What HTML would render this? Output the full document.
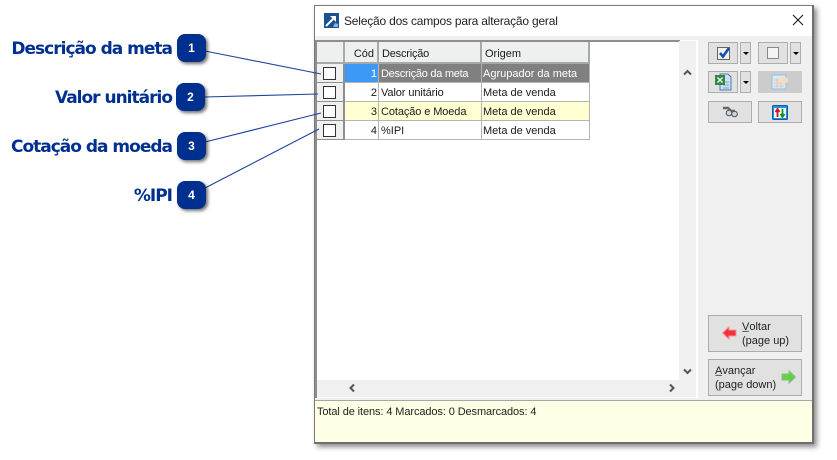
<!DOCTYPE html>
<html><head><meta charset="utf-8">
<style>
html,body{margin:0;padding:0;background:#fff;}
body{width:837px;height:460px;position:relative;overflow:hidden;font-family:"DejaVu Sans","Liberation Sans",sans-serif;}
.a{position:absolute;box-sizing:border-box;}
.lbl{position:absolute;right:665px;font:bold 17px/22px "DejaVu Sans",sans-serif;color:#00308f;white-space:nowrap;letter-spacing:-1px;}
.num{position:absolute;width:29px;height:28px;background:#00308f;border-radius:8px;color:#fff;font:bold 12px/28px "Liberation Sans",sans-serif;text-align:center;box-shadow:2px 2px 3px rgba(0,0,0,.55);}
.t{position:absolute;font:11px/18px "Liberation Sans",sans-serif;color:#222;white-space:nowrap;}
.cell{position:absolute;box-sizing:border-box;border-right:1px solid #b4b4b4;border-bottom:1px solid #b4b4b4;font:11px/20px "Liberation Sans",sans-serif;color:#1a1a1a;padding-left:2px;white-space:nowrap;overflow:hidden;height:19px;}
.hd{position:absolute;box-sizing:border-box;background:#eef0f0;border-right:2px solid #a8a8a8;border-bottom:2px solid #a8a8a8;font:11px/24px "Liberation Sans",sans-serif;color:#1a1a1a;height:22px;top:42px;padding-left:3px;overflow:hidden;}
.ind{position:absolute;box-sizing:border-box;left:317px;width:28px;height:19px;background:#f0f0f0;border-right:2px solid #8e8e8e;border-bottom:1px solid #8e8e8e;}
.ind i{position:absolute;left:6px;top:3px;width:13px;height:13px;border:1px solid #333;background:#fff;box-sizing:border-box;}
.btn{position:absolute;box-sizing:border-box;background:#e1e1e1;border:1px solid #adadad;}
.dd:after{content:"";position:absolute;left:2px;top:9px;border-left:3px solid transparent;border-right:3px solid transparent;border-top:3px solid #000;}
.n{letter-spacing:-.1px;}
</style></head>
<body>
<!-- callout lines -->
<svg class="a" style="left:0;top:0;z-index:3" width="837" height="460">
<g stroke="#1c44a0" stroke-width="1.1" fill="none">
<line x1="205" y1="51" x2="321" y2="74"/>
<line x1="204" y1="97" x2="318" y2="94"/>
<line x1="205" y1="142" x2="321" y2="113"/>
<line x1="205" y1="188" x2="319" y2="129"/>
</g></svg>

<div class="lbl" style="top:38px;">Descrição da meta</div>
<div class="lbl" style="top:87px;">Valor unitário</div>
<div class="lbl" style="top:136px;">Cotação da moeda</div>
<div class="lbl" style="top:185px;">%IPI</div>
<div class="num" style="left:177px;top:34px;z-index:4">1</div>
<div class="num" style="left:176px;top:83px;z-index:4">2</div>
<div class="num" style="left:177px;top:132px;z-index:4">3</div>
<div class="num" style="left:177px;top:181px;z-index:4">4</div>

<!-- window -->
<div class="a" style="left:314px;top:5px;width:500px;height:439px;background:#f0f0f0;border:1px solid #7a7a7a;border-right:2px solid #6f6f6f;border-bottom:2px solid #6f6f6f;box-shadow:3px 3px 5px rgba(0,0,0,.45);"></div>
<div class="a" style="left:315px;top:6px;width:497px;height:30px;background:#fff;"></div>
<svg class="a" style="left:324px;top:13px" width="15" height="15" viewBox="0 0 15 15">
<rect width="15" height="15" fill="#1b4f96"/><path d="M2 13 L9 6" stroke="#fff" stroke-width="2"/><path d="M6 3h6v6z" fill="#fff"/><path d="M9 14l2-4 3 1v3z" fill="#8fb4dc"/></svg>
<div class="t" style="left:344px;top:12px;font-size:12px;letter-spacing:-.2px;">Seleção dos campos para alteração geral</div>
<svg class="a" style="left:792px;top:14px" width="12" height="12"><path d="M1 1L11 11M11 1L1 11" stroke="#111" stroke-width="1"/></svg>

<!-- grid -->
<div class="a" style="left:316px;top:40px;width:382px;height:358px;background:#fff;"></div>
<div class="a" style="left:316px;top:40px;width:364px;height:2px;background:#8e8e8e;"></div>
<div class="a" style="left:315px;top:40px;width:2px;height:358px;background:#8e8e8e;"></div>
<div class="a" style="left:679px;top:41px;width:17px;height:339px;background:#f0f0f0;"></div>
<div class="a" style="left:317px;top:380px;width:379px;height:17px;background:#f0f0f0;"></div>
<div class="a" style="left:696px;top:40px;width:2px;height:358px;background:#fff;"></div>
<div class="a" style="left:317px;top:397px;width:381px;height:1px;background:#fff;"></div>
<svg class="a" style="left:679px;top:66px" width="17" height="12"><path d="M5 8.5L8.5 5L12 8.5" stroke="#555" stroke-width="2" fill="none"/></svg>
<svg class="a" style="left:679px;top:366px" width="17" height="12"><path d="M5 3.5L8.5 7L12 3.5" stroke="#555" stroke-width="2" fill="none"/></svg>
<svg class="a" style="left:346px;top:382px" width="12" height="12"><path d="M8 2.5L4.5 6L8 9.5" stroke="#555" stroke-width="2" fill="none"/></svg>
<svg class="a" style="left:666px;top:382px" width="12" height="12"><path d="M4 2.5L7.5 6L4 9.5" stroke="#555" stroke-width="2" fill="none"/></svg>

<div class="hd" style="left:317px;width:28px;"></div>
<div class="hd" style="left:345px;width:34px;text-align:right;padding-right:3px;">Cód</div>
<div class="hd" style="left:379px;width:103px;"><span style="letter-spacing:-.2px">Descrição</span></div>
<div class="hd" style="left:482px;width:108px;">Origem</div>

<div class="ind" style="top:64px"><i></i></div>
<div class="ind" style="top:83px"><i></i></div>
<div class="ind" style="top:102px"><i></i></div>
<div class="ind" style="top:121px"><i></i></div>

<div class="cell" style="left:345px;top:64px;width:34px;background:#3d99f5;color:#fff;text-align:right;padding-right:1px;">1</div>
<div class="cell" style="left:379px;top:64px;width:103px;background:#808080;color:#fff;letter-spacing:-.26px;">Descrição da meta</div>
<div class="cell" style="left:482px;top:64px;width:108px;background:#808080;color:#fff;padding-left:1px;">Agrupador da meta</div>

<div class="cell" style="left:345px;top:83px;width:34px;text-align:right;padding-right:1px;background:#fff;">2</div>
<div class="cell n" style="left:379px;top:83px;width:103px;background:#fff;">Valor unitário</div>
<div class="cell" style="left:482px;top:83px;width:108px;background:#fff;padding-left:1px;">Meta de venda</div>

<div class="cell" style="left:345px;top:102px;width:34px;text-align:right;padding-right:1px;background:#ffffd2;">3</div>
<div class="cell n" style="left:379px;top:102px;width:103px;background:#ffffd2;">Cotação e Moeda</div>
<div class="cell" style="left:482px;top:102px;width:108px;background:#ffffd2;padding-left:1px;">Meta de venda</div>

<div class="cell" style="left:345px;top:121px;width:34px;text-align:right;padding-right:1px;background:#fff;">4</div>
<div class="cell" style="left:379px;top:121px;width:103px;background:#fff;">%IPI</div>
<div class="cell" style="left:482px;top:121px;width:108px;background:#fff;padding-left:1px;">Meta de venda</div>

<!-- toolbar -->
<div class="btn" style="left:708px;top:42px;width:30px;height:22px;"></div>
<svg class="a" style="left:717px;top:46px" width="14" height="14"><rect x=".5" y="1.5" width="12" height="12" fill="#f0f0f0" stroke="#666"/><path d="M3 7l3 3.5L12 2" stroke="#0f4fb5" stroke-width="2.6" fill="none"/></svg>
<div class="btn dd" style="left:740px;top:42px;width:11px;height:22px;"></div>
<div class="btn" style="left:758px;top:42px;width:30px;height:22px;"></div>
<div class="a" style="left:767px;top:47px;width:12px;height:12px;background:#f4f4f4;border:1px solid #888;"></div>
<div class="btn dd" style="left:790px;top:42px;width:11px;height:22px;"></div>

<div class="btn" style="left:708px;top:71px;width:30px;height:22px;"></div>
<svg class="a" style="left:714px;top:73px" width="18" height="18"><path d="M6 1h8l3 3v13H6z" fill="#cfe0f2" stroke="#4a78b0"/><path d="M9 9h6M9 12h6M9 15h6" stroke="#7ea3cc"/><rect x="1" y="2" width="10" height="10" fill="#2f8a3f"/><path d="M3.5 4.5l5 5M8.5 4.5l-5 5" stroke="#fff" stroke-width="1.4"/></svg>
<div class="btn dd" style="left:740px;top:71px;width:11px;height:22px;"></div>
<div class="a" style="left:758px;top:71px;width:44px;height:22px;background:#cccccc;"></div>
<svg class="a" style="left:771px;top:73px" width="18" height="18"><rect x="1" y="2" width="14" height="14" rx="1" fill="#d8e8f4" stroke="#8cc0e8"/><path d="M3 7h10M3 10h10M3 13h10M6 5v10M10 5v10" stroke="#eeb9a0" stroke-width=".8"/><path d="M7 6q4-3 10-1v4q-5 3-8 0z" fill="#f3dcc0"/></svg>

<div class="btn" style="left:708px;top:101px;width:44px;height:22px;"></div>
<svg class="a" style="left:722px;top:106px" width="16" height="12"><path d="M1 2l5 0 3 3 4 0" stroke="#666" stroke-width="2.4" fill="none"/><circle cx="7" cy="7" r="2.8" fill="#c8d4e0" stroke="#555"/><circle cx="12.5" cy="8" r="2.8" fill="#c8d4e0" stroke="#555"/></svg>
<div class="btn" style="left:758px;top:101px;width:44px;height:22px;"></div>
<svg class="a" style="left:772px;top:105px" width="16" height="15"><rect x=".5" y=".5" width="15" height="14" rx="1" fill="#1f8fe0" stroke="#0a5fa8"/><rect x="2" y="3" width="12" height="10" fill="#f2f7fb"/><path d="M5.5 12V5M3.5 7l2-3 2 3" stroke="#d01818" stroke-width="1.8" fill="none"/><path d="M10.5 4v7M8.5 9l2 3 2-3" stroke="#1b8a2e" stroke-width="1.8" fill="none"/></svg>

<!-- nav -->
<div class="btn" style="left:708px;top:315px;width:94px;height:37px;"></div>
<svg class="a" style="left:722px;top:326px" width="15" height="14"><path d="M.5 7L7 .8V4h7v6H7v3.2z" fill="#f5303a" stroke="#f09aa0"/></svg>
<div class="t" style="left:742px;top:320px;line-height:14px;">V̲oltar<br>(page up)</div>
<div class="btn" style="left:708px;top:359px;width:94px;height:37px;"></div>
<div class="t" style="left:715px;top:364px;line-height:14px;">A̲vançar<br>(page down)</div>
<svg class="a" style="left:781px;top:370px" width="15" height="14"><path d="M14.5 7L8 .8V4H1v6h7v3.2z" fill="#62d23e" stroke="#8fb98f"/></svg>

<!-- status -->
<div class="a" style="left:315px;top:400px;width:497px;height:42px;background:#ffffe5;border-top:1px solid #a6a6a6;"></div>
<div class="t" style="left:317px;top:403px;letter-spacing:-.1px;">Total de itens: 4 Marcados: 0 Desmarcados: 4</div>
</body></html>
